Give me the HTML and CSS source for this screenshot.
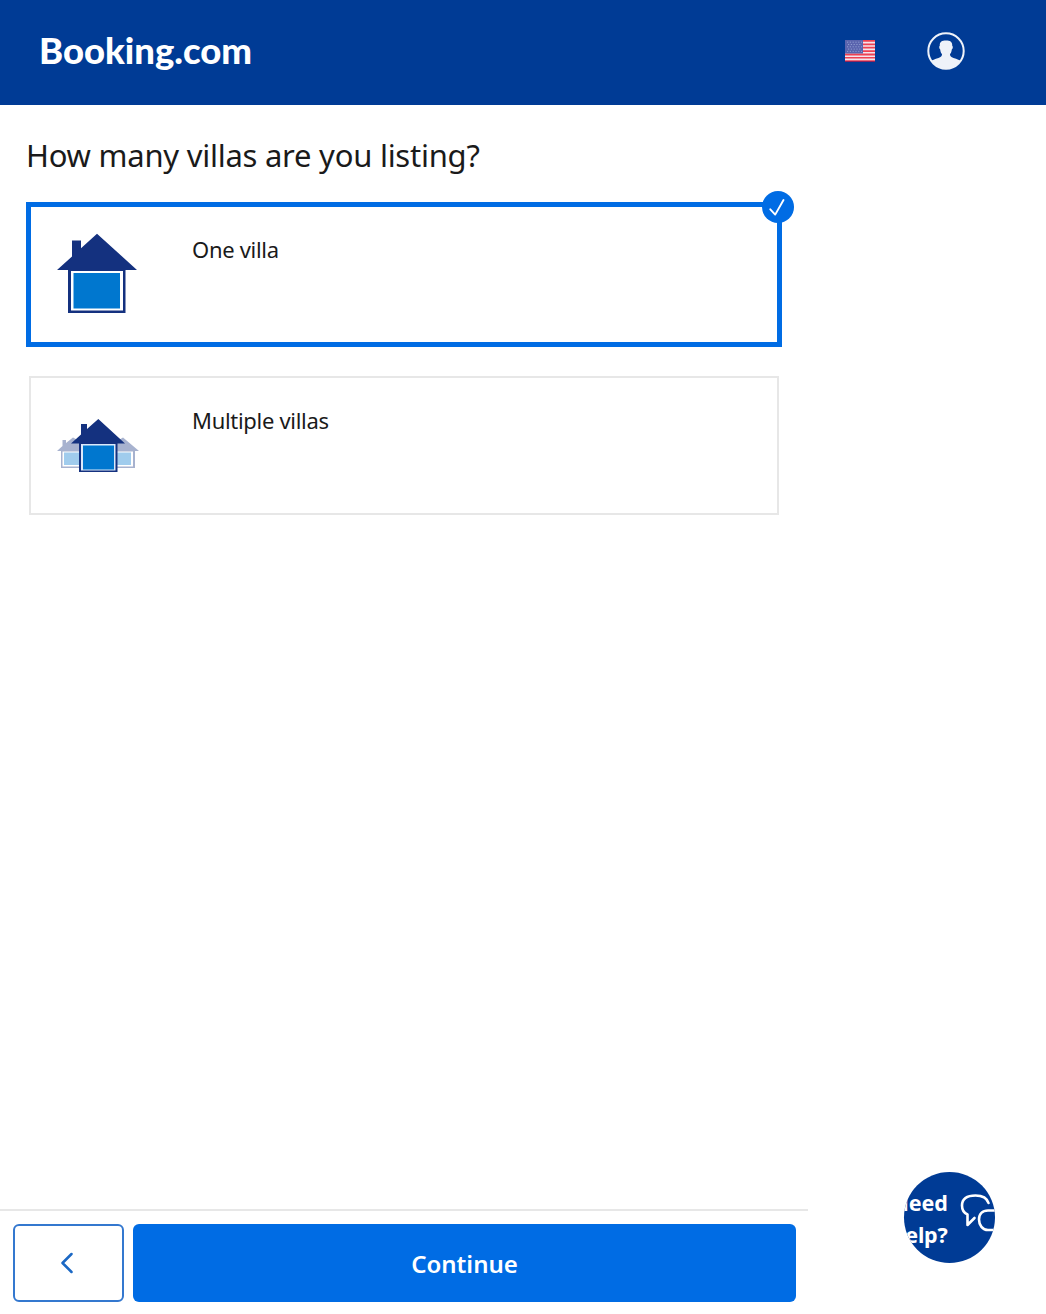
FILE: index.html
```html
<!DOCTYPE html>
<html lang="en">
<head>
<meta charset="utf-8">
<title>Booking.com</title>
<link rel="stylesheet" href="styles.css">
</head>
<body>
<header class="header">
  <svg class="logo" width="220" height="50" viewBox="0 0 220 50" role="img" aria-label="Booking.com">
    <text class="logo-text" x="1" y="37.500" textLength="213" lengthAdjust="spacingAndGlyphs">Booking.com</text>
  </svg>
  <div class="header-actions">
    <svg class="flag" width="30" height="22" viewBox="0 0 30 22">
      <rect width="30" height="22" fill="#ee4153"/>
      <path d="M0 2.6h30M0 6h30M0 9.4h30M0 12.8h30M0 16.2h30M0 19.4h30" stroke="#f4e4ec" stroke-width="1.6"/>
      <rect width="18" height="13.5" fill="#5a64ae"/>
      <path d="M2 2.2h15M3 4.5h14M2 6.8h15M3 9.1h14M2 11.4h15" stroke="#8f9cd0" stroke-width="1" stroke-dasharray="1.2 1.6"/>
      <path d="M0 21.5h30" stroke="#94235a"/>
    </svg>
    <svg class="avatar" width="38" height="38" viewBox="0 0 38 38">
      <clipPath id="face"><circle cx="19" cy="19" r="17.6"/></clipPath>
      <path clip-path="url(#face)" fill="#eef2f9" d="M3 29.500c2-1.500 5-2.300 8.500-3.500 2.500-.9 3.600-1.700 3.500-4-1.200-1.200-1.600-2.700-1.800-4.600-1.200-.8-1.300-3-.4-3.600-.3-3.800 1.900-5.300 6.200-5.300s6.500 1.500 6.200 5.300c.9.600.8 2.800-.4 3.600-.2 1.900-.6 3.400-1.800 4.600-.1 2.300 1 3.100 3.500 4 3.500 1.200 6.500 2 8.500 3.500V38H3z"/>
      <circle cx="19" cy="19" r="17.700" fill="none" stroke="#eef2f9" stroke-width="2"/>
    </svg>
  </div>
</header>

<main class="main">
  <h1 class="title">How many villas are you listing?</h1>
  <div class="options">
    <div class="option option-selected">
      <svg class="option-icon" width="82" height="82" viewBox="0 0 82 82">
        <path fill="#14317f" d="M1 37 16 23.500V7.500h9v7.800L41 .7 81 37H69.500v43H12V37z"/>
        <path fill="#fff" d="M15 38h52v39.500H15z"/>
        <path fill="#0077cf" d="M17.500 40h46.500v35.500h-46.500z"/>
      </svg>
      <span class="option-label">One villa</span>
      <span class="badge">
        <svg width="32" height="32" viewBox="0 0 32 32"><path d="m8.300 18.300 4.900 5.300L21.500 9" fill="none" stroke="#fff" stroke-width="1.900" stroke-linecap="round" stroke-linejoin="round"/></svg>
      </span>
    </div>
    <div class="option">
      <svg class="option-icon" width="82" height="82" viewBox="0 -1 82 82">
        <g opacity=".37">
          <path fill="#14317f" d="m0 46 5.500-5v-6H9v3l7-5.500 15 8V63H4V46z"/>
          <path fill="#fff" d="M5.500 46.500H31v15H5.500z"/>
          <path fill="#0077cf" d="M7 47.500h24v12.500H7z"/>
          <path fill="#14317f" d="m50 42 16-9.500L82 46h-4v17H50z"/>
          <path fill="#fff" d="M50 46.500h26v15H50z"/>
          <path fill="#0077cf" d="M50 47.500h24v12.500H50z"/>
        </g>
        <path fill="#14317f" d="m14 38.500 10-9V19h6v5L41.300 14 68 38.500h-7.500V67H22V38.500z"/>
        <path fill="#dce9fa" d="M24 39h34.500v26.500H24z"/>
        <path fill="#0077cf" d="M26 40.500h31v24H26z"/>
      </svg>
      <span class="option-label">Multiple villas</span>
    </div>
  </div>
</main>

<footer class="footer">
  <button class="back" aria-label="Back">
    <svg width="14" height="22" viewBox="0 0 14 22"><path d="m11.500 2-9 9 9 9" fill="none" stroke="#1b68c4" stroke-width="2.500" stroke-linecap="round" stroke-linejoin="round"/></svg>
  </button>
  <button class="continue">Continue</button>
</footer>

<div class="help">
  <span class="help-text">Need<br>help?</span>
  <svg class="help-icon" width="44" height="44" viewBox="0 0 44 44">
    <g fill="none" stroke="#fff" stroke-width="2.600" stroke-linecap="round" stroke-linejoin="round">
      <path d="M28.500 9C27 4 23 1.500 15.500 1.500 6.500 1.500 2 5 2 11.500c0 4.500 2 7.500 5.500 9V31l7-7"/>
      <path d="M36 16.500h-8c-5.500 0-9 3.500-9 9s3.500 10.500 9 10.500h8"/>
    </g>
  </svg>
</div>
</body>
</html>
```

FILE: styles.css
```css
* { box-sizing: border-box; }

body {
  margin: 0;
  min-height: 1314px;
  display: flex;
  flex-direction: column;
  position: relative;
  background: #fff;
  color: #1a1a1a;
  font-family: "Noto Sans", "Open Sans", sans-serif;
}

svg { display: block; }

.header {
  height: 105px;
  padding: 0 81px 3px 38px;
  display: flex;
  align-items: center;
  justify-content: space-between;
  background: #003b95;
}

.logo-text {
  font: 900 36px Lato, sans-serif;
  fill: #fff;
}

.header-actions {
  display: flex;
  align-items: center;
  gap: 52px;
}

.main {
  flex: 1;
  width: 808px;
  padding: 27px 26px 0;
}

.title {
  margin: 0;
  height: 70px;
  line-height: 46px;
  font-size: 31px;
  font-weight: 400;
  letter-spacing: -0.25px;
  white-space: nowrap;
}

.options {
  display: flex;
  flex-direction: column;
  gap: 29px;
}

.option {
  position: relative;
  width: 750px;
  height: 139px;
  margin-left: 3px;
  padding: 26px;
  display: flex;
  gap: 53px;
  border: 2px solid #e7e7e7;
}

.option-selected {
  width: 756px;
  height: 145px;
  margin-left: 0;
  padding: 26px 25px;
  gap: 54px;
  border: 5px solid #006ce4;
}

.option-label {
  line-height: 32px;
  font-size: 22px;
  letter-spacing: -0.3px;
}

.badge {
  position: absolute;
  top: -16px;
  right: -17px;
  width: 32px;
  height: 32px;
  border-radius: 50%;
  background: #006ce4;
}

.footer {
  width: 808px;
  height: 105px;
  padding: 13px 12px 12px 13px;
  display: flex;
  gap: 9px;
  border-top: 2px solid #e7e7e7;
}

.back,
.continue {
  height: 78px;
  border-radius: 6px;
  font-family: inherit;
}

.back {
  width: 111px;
  padding: 0 4px 1px 0;
  display: flex;
  align-items: center;
  justify-content: center;
  background: #fff;
  border: 2px solid #3478cf;
}

.continue {
  flex: 1;
  padding: 0;
  background: #006ce4;
  border: 0;
  color: #fff;
  font-size: 24px;
  font-weight: 600;
}

.help {
  position: absolute;
  left: 904px;
  top: 1172px;
  width: 91px;
  height: 91px;
  padding-top: 2px;
  display: flex;
  align-items: center;
  justify-content: center;
  gap: 12px;
  border-radius: 50%;
  background: #003b95;
  overflow: hidden;
}

.help-text {
  flex: none;
  margin-left: -4px;
  color: #fff;
  font-size: 21.5px;
  font-weight: 700;
  line-height: 32px;
  letter-spacing: -0.2px;
  text-align: right;
}

.help-icon {
  flex: none;
  margin-bottom: 5px;
}
```
